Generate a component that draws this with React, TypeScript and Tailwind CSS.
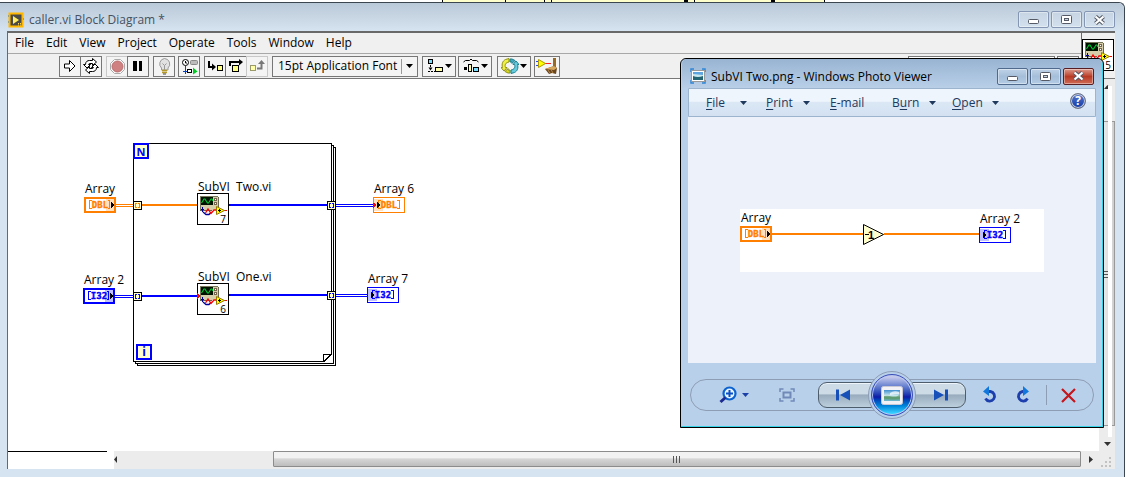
import type { ReactNode } from "react";

const UI = "font-['Open_Sans','Noto_Sans',sans-serif]";

function Caret({ className = "" }: { className?: string }) {
  return (
    <svg className={className} width="7" height="4" viewBox="0 0 7 4" fill="currentColor">
      <path d="M0 0h7L3.5 4z" />
    </svg>
  );
}

/* ---------- shared drawings ---------- */

function ScopeIcon({ n, redDot = false }: { n: string; redDot?: boolean }) {
  return (
    <svg width="32" height="32" viewBox="0 0 32 32" shapeRendering="crispEdges" className="block">
      <rect x="0.5" y="0.5" width="31" height="31" fill="#fff" stroke="#000" />
      <rect x="3" y="3" width="18" height="14" fill="#d6ceaa" />
      <path d="M3 17.5h12M21.5 4v10" stroke="#66664d" fill="none" />
      <path d="M3 3.5h18M3.5 3v14" stroke="#77775a" fill="none" />
      <rect x="4" y="4" width="12" height="8" fill="#001100" />
      <path d="M4.500 10l2.500-4h1l2.500 4h1L14 6h1l1 2" stroke="#00cc33" fill="none" shapeRendering="auto" strokeWidth="1.100" />
      <rect x="17.500" y="5.500" width="2" height="2" fill="#fff" stroke="#77664d" />
      <rect x="17.500" y="9.500" width="2" height="2" fill="#fff" stroke="#77664d" />
      <path d="M5.500 14v5M4 16.500h3" stroke="#000099" />
      <path d="M6 19l3 2.500h3L14.500 19" stroke="#000099" strokeWidth="1.300" fill="none" shapeRendering="auto" />
      <path d="M8.500 20l2.500-4 3 4.500 3-3.500h3" stroke="#ff0000" strokeWidth="1.300" fill="none" shapeRendering="auto" />
      <path d="M26 17.500h4" stroke="#ff0000" />
      <path d="M19.500 13.500v8l8-4z" fill="#ffff00" stroke="#997a00" shapeRendering="auto" />
      <path d="M21 17.500h3M22.500 16v3" stroke="#000" />
      {redDot && <path d="M0 10l4 3-4 3z" fill="#ff0000" />}
      <text x="26" y="30" fontSize="10" textAnchor="middle" fontFamily="Open Sans, sans-serif" fill="#000">
        {n}
      </text>
    </svg>
  );
}

type TerminalProps = { text: string; kind: "control" | "indicator"; tone: "orange" | "blue"; coerced?: boolean };

function Terminal({ text, kind, tone, coerced }: TerminalProps) {
  const c = tone === "orange" ? "#ff8000" : "#0000ff";
  const soft = tone === "orange" ? "#ffe0c0" : "#c0c0ff";
  const control = kind === "control";
  return (
    <svg width="32" height="16" viewBox="0 0 32 16" shapeRendering="crispEdges" className="block">
      <rect width="32" height="16" fill={c} />
      <rect x={control ? 2 : 1} y={control ? 2 : 1} width={control ? 28 : 30} height={control ? 12 : 14} fill="#fff" />
      <rect x={control ? 22 : 1} y="2" width={control ? 8 : 9} height="12" fill={soft} />
      <path
        d={control ? "M7.500 3.500H5.500v8h2M24 3.500h1.500v8H24" : "M8 3.500H5.500v8H8M24 3.500h2.500v8H24"}
        stroke={c}
        fill="none"
      />
      <text
        x={16}
        y="11"
        fontSize="9"
        fontWeight="700"
        textAnchor="middle"
        fontFamily="DejaVu Sans Mono, monospace"
        fill={c}
        stroke={c}
        strokeWidth="0.400"
      >
        {text}
      </text>
      <path d={control ? "M27 5l3 3-3 3z" : "M4 5l3 3-3 3z"} fill="#000" stroke="#000" strokeWidth="0.500" />
      {coerced && <path d="M0 6l3 2-3 3z" fill="#ff0000" stroke="#ff0000" />}
    </svg>
  );
}

function Tunnel({ x, y, c }: { x: number; y: number; c: string }) {
  return (
    <g>
      <rect x={x + 0.5} y={y + 0.5} width="8" height="8" fill="#ffffcc" stroke="#000" />
      <path d={`M${x + 4} ${y + 2.5}h-1.500v4h1.500M${x + 5} ${y + 2.5}h1.500v4h-1.500`} stroke={c} fill="none" />
    </g>
  );
}

/* ---------- window caption buttons ---------- */

function Caption({ active }: { active?: boolean }) {
  const base = active
    ? "border-[#4f6a8c] bg-linear-to-b from-[#bfd3e8] via-[#a5bed9] to-[#b4cce5]"
    : "border-[#8496b3] bg-linear-to-b from-[#c6d4e3] to-[#d3e0ee]";
  const close = active
    ? "border-[#571f24] bg-linear-to-b from-[#dc9a8c] via-[#b83a24] to-[#cf6a55]"
    : base;
  const box = "flex h-[17px] w-[31px] items-center justify-center rounded-[2px] border shadow-[inset_0_0_0_1px_#ffffff66]";
  const s = "#555a66";
  return (
    <div className="flex gap-[2px]">
      <button aria-label="Minimize" className={`${box} ${base}`}>
        <svg width="13" height="9" viewBox="0 0 13 9">
          <rect x="1.500" y="4.500" width="10" height="4" rx="1" fill="#fff" stroke={s} />
        </svg>
      </button>
      <button aria-label="Maximize" className={`${box} ${base}`}>
        <svg width="11" height="9" viewBox="0 0 11 9">
          <rect x="0.500" y="0.500" width="10" height="8" rx="1" fill="#fff" stroke={s} />
          <rect x="3.500" y="3.500" width="4" height="2" fill="#c6d4e3" stroke={s} />
        </svg>
      </button>
      <button aria-label="Close" className={`${box} ${close}`}>
        <svg width="13" height="10" viewBox="0 0 13 10">
          <path d="M2.500 1.500l8 7M10.500 1.500l-8 7" stroke={s} strokeWidth="4.200" />
          <path d="M2.500 1.500l8 7M10.500 1.500l-8 7" stroke="#fff" strokeWidth="2.200" />
        </svg>
      </button>
    </div>
  );
}

/* ---------- toolbar ---------- */

function Tool({ label, children, dim, caret, className = "w-[22px]" }: {
  label: string;
  children?: ReactNode;
  dim?: boolean;
  caret?: boolean;
  className?: string;
}) {
  return (
    <button
      aria-label={label}
      className={`-mr-px flex h-[21px] shrink-0 items-center justify-center border bg-[#f4f4f4] text-black ${dim ? "border-[#c8c8c8]" : "border-[#777777]"} ${className}`}
    >
      {children}
      {caret && <Caret className="ml-px" />}
    </button>
  );
}

function Toolbar() {
  return (
    <div className="flex h-[24px] items-center pl-[51px]" role="toolbar">
      <div className="flex">
        <Tool label="Run">
          <svg width="14" height="14" viewBox="0 0 14 14">
            <path d="M1.500 5h5V1.500L12 7l-5.500 5.500V9h-5z" fill="#fff" stroke="#000" />
          </svg>
        </Tool>
        <Tool label="Run Continuously">
          <svg width="16" height="16" viewBox="0 0 16 16" fill="#fff" stroke="#000">
            <path d="M2.500 6.500c0-3 2-4 4-4h3V.500l4 3.500-4 3.500v-2H7c-1 0-1.500.5-1.500 1H7.500L4 10 .500 6.500z" />
            <path d="M13.500 9.500c0 3-2 4-4 4h-3v2l-4-3.500 4-3.500v2H9c1 0 1.500-.5 1.500-1H8.500L12 6l3.500 3.500z" />
          </svg>
        </Tool>
      </div>
      <div className="ml-[5px] flex">
        <Tool label="Abort Execution" dim>
          <svg width="15" height="15" viewBox="0 0 15 15">
            <path d="M4.500.5h6l4 4v6l-4 4h-6l-4-4v-6z" fill="#fff" stroke="#aaa" />
            <circle cx="7.500" cy="7.500" r="5.500" fill="#cf8080" stroke="#b86c6c" />
          </svg>
        </Tool>
        <Tool label="Pause">
          <svg width="10" height="10" viewBox="0 0 10 10">
            <path d="M0 0h4v10H0zM6 0h3v10H6z" />
          </svg>
        </Tool>
      </div>
      <div className="ml-[5px] flex">
        <Tool label="Highlight Execution">
          <svg width="13" height="17" viewBox="0 0 13 17">
            <path d="M6.500.5a5.500 5.500 0 0 1 3.500 9.500v2H3.500v-2A5.500 5.500 0 0 1 6.500.5z" fill="#e2e2e2" stroke="#999" />
            <path d="M4.500 5.500l2 2 2-2M6.500 7.500V12" stroke="#999" fill="none" />
            <path d="M4 12.500h5M4 14.500h5" stroke="#b49a2d" strokeWidth="1.500" />
            <path d="M5 16h3" stroke="#444" />
          </svg>
        </Tool>
      </div>
      <div className="ml-[4px] flex">
        <Tool label="Retain Wire Values">
          <svg width="17" height="17" viewBox="0 0 17 17">
            <circle cx="4.500" cy="4.500" r="3" fill="#fff" stroke="#000" />
            <path d="M4.500 3v2H6" stroke="#000" fill="none" />
            <rect x="9.500" y="2.500" width="7" height="4" rx="1" fill="#bbb" stroke="#888" />
            <path d="M4.500 8v8M2 13.500h9" stroke="#0044cc" />
            <rect x="6.500" y="11.500" width="4" height="3" fill="#fff" stroke="#000" />
            <path d="M12 9.500l4.500 4-4.500 3z" fill="#00cc22" />
          </svg>
        </Tool>
      </div>
      <div className="ml-[5px] flex">
        <Tool label="Step Into">
          <svg width="17" height="14" viewBox="0 0 17 14">
            <path d="M2 2v6h4" stroke="#000" strokeWidth="2" fill="none" />
            <path d="M5 4.500L9 8l-4 3.500z" />
            <rect x="10.500" y="6.500" width="5" height="5" fill="#ffff88" stroke="#000" />
          </svg>
        </Tool>
        <Tool label="Step Over">
          <svg width="16" height="14" viewBox="0 0 16 14">
            <path d="M2 7V3h9" stroke="#000" strokeWidth="2" fill="none" />
            <path d="M11 0v6.500L15 3z" />
            <rect x="4.500" y="6.500" width="6" height="6" fill="#ffff88" stroke="#000" />
          </svg>
        </Tool>
        <Tool label="Step Out" dim>
          <svg width="17" height="14" viewBox="0 0 17 14">
            <rect x="1.500" y="6.500" width="5" height="5" fill="#ffffaa" stroke="#99996a" />
            <path d="M8 9.500h4.500V4" stroke="#777" strokeWidth="2" fill="none" />
            <path d="M9 5l3.500-4L16 5z" fill="#777" />
          </svg>
        </Tool>
      </div>
      <button className="ml-[5px] flex h-[21px] w-[146px] items-center border border-[#777777] bg-[#f4f4f4] pl-[5px] text-xs text-black">
        <span className="grow text-left whitespace-nowrap">15pt Application Font</span>
        <span className="flex h-[15px] w-[16px] shrink-0 items-center justify-center border-l border-[#999999]">
          <Caret />
        </span>
      </button>
      <div className="ml-1 flex">
        <Tool label="Align Objects" caret className="w-[34px]">
          <svg width="17" height="14" viewBox="0 0 17 14">
            <rect x="1.500" y="0.500" width="4" height="4" fill="#77ddff" stroke="#000" />
            <path d="M3.500 6v4M1 12.500h7" stroke="#000" strokeDasharray="2 1" />
            <path d="M1.500 8.500h4l-2 3z" />
            <rect x="8.500" y="8.500" width="7" height="4" fill="#ffffaa" stroke="#000" />
          </svg>
        </Tool>
      </div>
      <div className="ml-[3px] flex">
        <Tool label="Distribute Objects" caret className="w-[34px]">
          <svg width="17" height="14" viewBox="0 0 17 14">
            <path d="M.5 3l2-1.500h4L8 0l1.500 1.500h4l2 1.500" stroke="#000" fill="none" />
            <rect x="1" y="8" width="3" height="3" />
            <rect x="5.500" y="5.500" width="3" height="7" fill="#ffffaa" stroke="#000" />
            <rect x="10.500" y="8.500" width="5" height="4" fill="#77ddff" stroke="#000" />
          </svg>
        </Tool>
      </div>
      <div className="ml-[6px] flex">
        <Tool label="Reorder" caret className="w-[34px]">
          <svg width="18" height="16" viewBox="0 0 18 16">
            <path d="M8 .500L4.500 1.500C1.500 3 .500 6 1.500 9.500H0L3 13l3-3.500H4.500c-1-2.500 0-5 3.500-5.500z" fill="#f0f044" stroke="#8f8f10" />
            <path d="M4 13.500l3-3v1.500h2v3H7z" fill="#d6d622" stroke="#8f8f10" />
            <path d="M10 15.500l3.500-1c3-1.500 4-4.500 3-8H18L15 3l-3 3.500h1.500c1 2.500 0 5-3.500 5.500z" fill="#66ccdd" stroke="#1d7f92" />
            <path d="M14 2.500l-3 3V4H9V1h2z" fill="#44aabb" stroke="#1d7f92" />
          </svg>
        </Tool>
      </div>
      <div className="ml-1 flex">
        <Tool label="Clean Up Diagram" className="w-[26px]">
          <svg width="22" height="17" viewBox="0 0 22 17">
            <path d="M0 3.500h3M0 7.500h3" stroke="#2244ff" />
            <path d="M9 5.500h6" stroke="#ff2222" />
            <path d="M2.500 1.500v8l7-4z" fill="#ffff00" stroke="#aa9900" />
            <path d="M17 0h3v9h-3z" fill="#9a6a22" />
            <path d="M9 11l9-3 3 2-1 6-4-1-3 1z" fill="#6b451c" />
            <path d="M9 11l9-3 3 2-3 2z" fill="#d8a85e" />
            <path d="M12 12l2 3M15 11.500l2 3.500" stroke="#b98a48" />
          </svg>
        </Tool>
      </div>
      <input
        aria-label="Search"
        className="mr-[2px] ml-auto h-[21px] w-[147px] border border-[#777777] bg-white text-xs outline-none"
      />
      <Tool label="Context Help" className="mr-[2px] w-[22px]" />
    </div>
  );
}

/* ---------- block diagram ---------- */

function Label({ children, className }: { children: ReactNode; className: string }) {
  return <span className={`absolute text-xs leading-4 whitespace-pre text-black ${className}`}>{children}</span>;
}

function Diagram() {
  return (
    <div className="relative min-h-0 grow overflow-hidden bg-white">
      <svg className="absolute top-0 left-0" width="420" height="300" viewBox="8 79 420 300" shapeRendering="crispEdges" fill="none">
        <g fill="#fff" stroke="#000">
          <rect x="137.500" y="147.500" width="198" height="218" />
          <rect x="135.500" y="145.500" width="198" height="218" />
          <rect x="133.500" y="143.500" width="198" height="218" />
        </g>
        <path d="M324 355h8v7h-8z" fill="#fff" />
        <path d="M323.500 362v-8h8" stroke="#000" />
        <path d="M331.500 354l-8 8" stroke="#000" />
        <path d="M115 204.500h19M115 206.500h19" stroke="#ff8000" />
        <path d="M142 205h55" stroke="#ff8000" strokeWidth="2" />
        <path d="M229 205h99M142 296h55M229 295h99" stroke="#0000ff" strokeWidth="2" />
        <path d="M335 204.500h39M335 206.500h39M335 294.500h33M335 296.500h33M115 295.500h19M115 297.500h19" stroke="#0000ff" />
        <Tunnel x={133} y={201} c="#ff8000" />
        <Tunnel x={133} y={292} c="#0000ff" />
        <Tunnel x={327} y={201} c="#0000ff" />
        <Tunnel x={327} y={291} c="#0000ff" />
      </svg>
      <span className="absolute top-[64px] left-[125px] flex h-4 w-4 items-center justify-center border-2 border-[#0000ff] bg-[#ffffcc] text-[11px] leading-none font-bold text-[#0000ff]">N</span>
      <span className="absolute top-[265px] left-[128px] flex h-4 w-4 items-center justify-center border-2 border-[#0000ff] bg-[#ffffcc] text-xs leading-none font-bold text-[#0000ff]">i</span>

      <Label className="top-[102px] left-[77px]">Array</Label>
      <div className="absolute top-[118px] left-[76px]"><Terminal text="DBL" kind="control" tone="orange" /></div>
      <Label className="top-[193px] left-[76px]">Array 2</Label>
      <div className="absolute top-[209px] left-[75px]"><Terminal text="I32" kind="control" tone="blue" /></div>

      <Label className="top-[100px] left-[190px]">{"SubVI  Two.vi"}</Label>
      <div className="absolute top-[114px] left-[189px]"><ScopeIcon n="7" /></div>
      <Label className="top-[190px] left-[190px]">{"SubVI  One.vi"}</Label>
      <div className="absolute top-[204px] left-[189px]"><ScopeIcon n="6" redDot /></div>

      <Label className="top-[102px] left-[366px]">Array 6</Label>
      <div className="absolute top-[118px] left-[365px]"><Terminal text="DBL" kind="indicator" tone="orange" coerced /></div>
      <Label className="top-[192px] left-[360px]">Array 7</Label>
      <div className="absolute top-[208px] left-[359px]"><Terminal text="I32" kind="indicator" tone="blue" /></div>
    </div>
  );
}

function BlockDiagramWindow() {
  const menus = ["File", "Edit", "View", "Project", "Operate", "Tools", "Window", "Help"];
  return (
    <section className="mr-[3px] flex min-h-0 grow flex-col rounded-tr-[6px] border-t border-r border-[#3c4650] bg-[#d6e4f1] pr-[9px] pb-[8px] pl-[7px]">
      <header className="-mr-[9px] -ml-[7px] flex h-[28px] shrink-0 items-center rounded-tr-[6px] bg-linear-to-b from-[#bac9d8] to-[#d6e3f0] pr-[9px] pl-2">
        <svg width="16" height="16" viewBox="0 0 16 16" className="mt-[5px] mr-[5px]">
          <path d="M0 4h2M0 10h2M14 7h2" stroke="#4488dd" strokeWidth="2" />
          <rect x="1.500" y="1.500" width="13" height="13" fill="#4a4a48" stroke="#ffb700" strokeWidth="2" />
          <path d="M5 4v8l6-4z" fill="#ffee66" />
          <path d="M10 11.500h4M10 13h4" stroke="#ffd94d" strokeDasharray="1 1" />
        </svg>
        <h1 className="mt-[5px] grow text-xs text-[#46525f]">caller.vi Block Diagram *</h1>
        <div className="mt-[5px]"><Caption /></div>
      </header>
      <div className="flex min-h-0 grow flex-col border-t-2 border-l border-[#696969] bg-[#f0f0f0]">
        <div className="flex">
          <div className="flex min-w-0 grow flex-col">
            <nav className="flex h-[21px] items-center gap-3 border-b border-[#a8a8a8] pl-[7px] text-xs text-black">
              {menus.map((m) => (
                <button key={m}>{m}</button>
              ))}
            </nav>
            <Toolbar />
          </div>
          <div className="flex w-[34px] shrink-0 items-start border-l border-[#696969] pt-[6px]">
            <ScopeIcon n="5" />
          </div>
        </div>
        <div className="flex min-h-0 grow border-t border-[#777777]">
          <Diagram />
          <div className="relative flex w-4 shrink-0 flex-col items-center justify-between bg-[#ececec]">
            <svg width="9" height="12" viewBox="0 0 9 12"><path d="M1 10h7L4.500 6z" fill="#333" /></svg>
            <div className="mt-[30px] flex w-full grow flex-col items-center justify-center border border-[#999999] bg-linear-to-r from-[#f4f4f4] to-[#cfcfcf]">
              <svg width="7" height="8" viewBox="0 0 7 8"><path d="M0 1.500h7M0 4.500h7M0 7.500h7" stroke="#555" /></svg>
            </div>
            <svg className="mt-[13px]" width="9" height="12" viewBox="0 0 9 12"><path d="M1 3h7L4.500 7z" fill="#333" /></svg>
            <span className="absolute top-[7px] right-[3px] bottom-[14px] w-1 bg-white" />
          </div>
        </div>
        <div className="flex h-[18px] shrink-0 bg-[#ececec]">
          <div className="w-[106px] shrink-0 bg-white">
            <div className="h-px w-[99px] bg-black" />
          </div>
          <svg className="mt-[4px] shrink-0" width="6" height="9" viewBox="0 0 6 9"><path d="M3 1v7L0 4.500z" fill="#333" /></svg>
          <div className="mr-[6px] ml-auto flex h-4 w-[73%] items-center justify-center rounded-[1px] border border-[#8c8c8c] bg-linear-to-b from-[#f2f2f2] from-40% via-[#d6d6d6] via-50% to-[#bdbdbd]">
            <svg width="8" height="7" viewBox="0 0 8 7"><path d="M.5 0v7M3.500 0v7M6.500 0v7" stroke="#555" /></svg>
          </div>
          <svg className="mt-[4px] shrink-0" width="12" height="9" viewBox="0 0 12 9"><path d="M2 1v7l4-3.500z" fill="#333" /></svg>
          <svg className="mt-[5px] shrink-0" width="16" height="12" viewBox="0 0 16 12">
            <path d="M10 1h2v2h-2zM6 5h2v2H6zM10 5h2v2h-2zM2 9h2v2H2zM6 9h2v2H6zM10 9h2v2h-2z" fill="#c2c2c2" />
          </svg>
        </div>
      </div>
    </section>
  );
}

/* ---------- photo viewer ---------- */

function PictureGlyph() {
  return (
    <svg width="22" height="19" viewBox="0 0 22 19">
      <defs>
        <linearGradient id="sky" x1="0" y1="0" x2="0" y2="1">
          <stop offset="0" stopColor="#3f8fd0" />
          <stop offset="0.500" stopColor="#c8e6ee" />
          <stop offset="0.700" stopColor="#5c9a6c" />
          <stop offset="1" stopColor="#6fb9d9" />
        </linearGradient>
      </defs>
      <rect x="0.500" y="0.500" width="21" height="18" rx="2" fill="#f2f2f6" stroke="#c9c9d6" />
      <rect x="3" y="4" width="16" height="11" fill="url(#sky)" />
      <path d="M3 10q5-1 8 1t8-3v5q-8 2-16-1z" fill="#5c9a6c" opacity="0.600" />
      <path d="M9 7q4-3 9-1v2q-4 0-9 1z" fill="#fff" opacity="0.700" />
    </svg>
  );
}

function ViewerMenu({ pre = "", hot, rest, caret, className = "" }: { pre?: string; hot: string; rest: string; caret?: boolean; className?: string }) {
  return (
    <button className={`flex items-center text-xs text-[#1e395b] ${className}`}>
      <span className="whitespace-nowrap">
        {pre}
        <span className="underline underline-offset-2">{hot}</span>
        {rest}
      </span>
      {caret && <Caret className="ml-auto" />}
    </button>
  );
}

function PhotoViewerWindow() {
  return (
    <section className="absolute top-[58px] right-[24px] flex h-[370px] w-[424px] flex-col rounded-t-[6px] border border-black bg-[#b9d0ea] px-[6px] shadow-[inset_-1px_-1px_0_0_#35d3e8]">
      <header className="-mx-[5px] flex h-[29px] shrink-0 items-center rounded-t-[5px] bg-linear-to-b from-[#98b4d2] to-[#b9cfe8] pr-[8px] pl-[8px]">
        <svg width="16" height="16" viewBox="0 0 16 16" className="mt-[5px]">
          <path d="M1 4V1h3M12 1h3v3M15 12v3h-3M4 15H1v-3" fill="none" stroke="#2f86d6" strokeWidth="1.500" />
          <rect x="1.500" y="2.500" width="13" height="11" fill="#fff" stroke="#999" />
          <rect x="3" y="4" width="10" height="8" fill="#5ea4de" />
          <path d="M3 6l10 1v2H3z" fill="#c8e6ee" />
          <path d="M3 8q5 2 10 0v4H3z" fill="#236572" />
        </svg>
        <h2 className="mt-[6px] ml-[5px] grow text-xs whitespace-nowrap text-black">SubVI Two.png - Windows Photo Viewer</h2>
        <div className="mt-[5px]"><Caption active /></div>
      </header>
      <nav className="mx-px flex h-[29px] shrink-0 items-center rounded-[1px] border border-[#9db4cf] bg-linear-to-b from-[#eff5fc] from-45% via-[#dbe7f5] via-50% to-[#d3e1f1] pr-[9px] pl-[17px]">
        <ViewerMenu hot="F" rest="ile" caret className="w-[41px]" />
        <ViewerMenu hot="P" rest="rint" caret className="ml-[19px] w-[44px]" />
        <ViewerMenu hot="E" rest="-mail" className="ml-5 w-[42px]" />
        <ViewerMenu pre="B" hot="u" rest="rn" caret className="ml-5 w-[44px]" />
        <ViewerMenu hot="O" rest="pen" caret className="ml-4 w-[47px]" />
        <button aria-label="Help" className="mb-[3px] ml-auto flex h-4 w-4 items-center justify-center rounded-full border border-[#6c7484] bg-linear-to-b from-[#5577cc] to-[#1339a8] text-xs leading-none font-bold text-white shadow-[inset_0_0_0_1px_#c8cdd8]">
          ?
        </button>
      </nav>
      <div className="mx-px flex min-h-0 grow flex-col items-center bg-[#edf2fa]">
        <figure className="relative mt-[92px] h-[63px] w-[304px] bg-white">
          <svg className="absolute top-0 left-0" width="304" height="63" viewBox="740 209 304 63">
            <path d="M772 234h92M884 234h96" stroke="#ff8000" strokeWidth="2" shapeRendering="crispEdges" />
            <path d="M863.500 224.500v20l20-10z" fill="#ffffcc" stroke="#000" />
            <path d="M865 234.500h4" stroke="#000" />
            <text x="868" y="239" fontSize="11" fontWeight="700" fontFamily="Liberation Sans, sans-serif">1</text>
          </svg>
          <Label className="top-px left-px">Array</Label>
          <div className="absolute top-[17px] left-0"><Terminal text="DBL" kind="control" tone="orange" /></div>
          <Label className="top-[2px] left-[240px]">Array 2</Label>
          <div className="absolute top-[18px] left-[239px]"><Terminal text="I32" kind="indicator" tone="blue" /></div>
        </figure>
      </div>
      <footer className="flex h-[64px] shrink-0 items-center px-[3px]">
        <div className="flex h-8 grow items-center rounded-full border border-[#8d9db4] pr-[17px] pl-[28px]">
          <button aria-label="Zoom" className="flex items-center text-[#1c3fa8]">
            <svg width="20" height="18" viewBox="0 0 20 18">
              <circle cx="10.500" cy="7.500" r="6" fill="#e8f4ff" stroke="#0b62d0" strokeWidth="2.200" />
              <path d="M6.500 11.500L1.500 16" stroke="#1b2a90" strokeWidth="3" />
              <path d="M7 7.500h7M10.500 4v7" stroke="#0b4fc0" strokeWidth="2" />
            </svg>
            <Caret className="ml-[3px]" />
          </button>
          <button aria-label="Actual size" className="ml-[30px]">
            <svg width="16" height="14" viewBox="0 0 16 14" fill="none" stroke="#7089b8" strokeWidth="1.500">
              <path d="M1 4V1h3.500M11.500 1H15v3M15 10v3h-3.500M4.500 13H1v-3" />
              <rect x="4.500" y="4.500" width="7" height="5" strokeWidth="2" />
            </svg>
          </button>
          <div className="ml-[23px] flex items-center">
            <button aria-label="Previous" className="flex h-[26px] w-[54px] items-center justify-center rounded-l-[9px] border border-[#4e5d6b] bg-linear-to-b from-[#cddbe6] from-45% via-[#98acbe] via-50% to-[#bccfdd] pr-1 shadow-[inset_0_1px_0_0_#eef5fb]">
              <svg width="16" height="12" viewBox="0 0 16 12" fill="#1750b8">
                <path d="M1 .5h3v11H1zM15 .5v11L5 6z" />
              </svg>
            </button>
            <button aria-label="Play slide show" className="z-10 -mx-[4px] flex h-[48px] w-[48px] items-center justify-center rounded-full border border-[#8d9db4] bg-[#b9d0ea]">
              <span className="flex h-[42px] w-[42px] items-center justify-center rounded-full border border-[#3b4db8] bg-linear-to-b from-[#c6c9ea] from-5% via-[#1018a8] via-55% to-[#35d0ff] to-95% shadow-[inset_0_0_0_1px_#b8c8f0]">
                <PictureGlyph />
              </span>
            </button>
            <button aria-label="Next" className="flex h-[26px] w-[54px] items-center justify-center rounded-r-[9px] border border-[#4e5d6b] bg-linear-to-b from-[#cddbe6] from-45% via-[#98acbe] via-50% to-[#bccfdd] pl-1 shadow-[inset_0_1px_0_0_#eef5fb]">
              <svg width="16" height="12" viewBox="0 0 16 12" fill="#1750b8">
                <path d="M15 .5h-3v11h3zM1 .5v11L11 6z" />
              </svg>
            </button>
          </div>
          <button aria-label="Rotate counterclockwise" className="ml-4">
            <svg width="16" height="18" viewBox="0 0 16 18">
              <path d="M5 5.500h3.500a4.800 4.800 0 1 1-5 7" fill="none" stroke="#1d3fae" strokeWidth="2.800" />
              <path d="M1 5.500L7 0v10z" fill="#1177dd" />
            </svg>
          </button>
          <button aria-label="Rotate clockwise" className="ml-[17px]">
            <svg width="16" height="18" viewBox="0 0 16 18">
              <path d="M10 5.500H7.500a4.800 4.800 0 1 0 5 7" fill="none" stroke="#1d3fae" strokeWidth="2.800" />
              <path d="M14 5.500L8 0v10z" fill="#1177dd" />
            </svg>
          </button>
          <span className="ml-auto h-5 w-px bg-[#8d9db4]" />
          <button aria-label="Delete" className="ml-[14px]">
            <svg width="15" height="15" viewBox="0 0 15 15">
              <path d="M1 1l13 13M14 1L1 14" stroke="#c4161c" strokeWidth="2.200" />
            </svg>
          </button>
        </div>
      </footer>
    </section>
  );
}

export default function App() {
  return (
    <main className={`relative flex h-screen min-h-[440px] flex-col overflow-hidden bg-white ${UI}`}>
      <svg className="h-[2px] w-full shrink-0" height="2" shapeRendering="crispEdges" aria-hidden="true">
        <path d="M442 0h382v2H442z" fill="#ffffcc" />
        <path d="M442 0h1v2h-1zM505 0h1v2h-1zM544 0h1v2h-1zM551 0h1v2h-1zM684 0h4v2h-4zM694 0h1v2h-1zM771 0h4v2h-4zM824 0h1v2h-1z" />
      </svg>
      <BlockDiagramWindow />
      <PhotoViewerWindow />
    </main>
  );
}
